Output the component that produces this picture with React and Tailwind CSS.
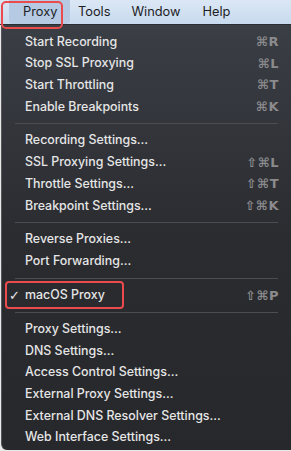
const GROUPS = [
  [
    { label: 'Start Recording', keys: '⌘R' },
    { label: 'Stop SSL Proxying', keys: '⌘L' },
    { label: 'Start Throttling', keys: '⌘T' },
    { label: 'Enable Breakpoints', keys: '⌘K' },
  ],
  [
    { label: 'Recording Settings...' },
    { label: 'SSL Proxying Settings...', keys: '⇧⌘L' },
    { label: 'Throttle Settings...', keys: '⇧⌘T' },
    { label: 'Breakpoint Settings...', keys: '⇧⌘K' },
  ],
  [{ label: 'Reverse Proxies...' }, { label: 'Port Forwarding...' }],
  [{ label: 'macOS Proxy', keys: '⇧⌘P', checked: true, marked: true }],
  [
    { label: 'Proxy Settings...' },
    { label: 'DNS Settings...' },
    { label: 'Access Control Settings...' },
    { label: 'External Proxy Settings...' },
    { label: 'External DNS Resolver Settings...' },
    { label: 'Web Interface Settings...' },
  ],
]

function MenuItem({ item }) {
  return (
    <div className="relative flex items-center h-[21.7px] pl-[23px] pr-[12px]">
      {item.checked && (
        <span className="absolute left-[7px] text-[13px] text-[#e8e8e8] font-['DejaVu_Sans',sans-serif]">✓</span>
      )}
      <span className="flex-1 text-[12.4px] text-[#e6e6e6] font-medium">{item.label}</span>
      {item.keys && (
        <span className="text-[13px] text-[#8b8b8d] font-['DejaVu_Sans',sans-serif] font-bold tracking-[0.5px]">{item.keys}</span>
      )}
      {item.marked && (
        <div className="absolute left-[3px] top-[-3px] w-[119px] h-[28px] rounded-[4px] border-[2.5px] border-[#ec4b4e]" />
      )}
    </div>
  )
}

export default function App() {
  return (
    <div className="relative w-[291px] h-[451px] overflow-hidden bg-[#e9e9ea] font-['Inter',sans-serif]">
      {/* menu bar */}
      <div className="relative flex items-center h-[25px] bg-gradient-to-b from-[#dbe7f5] to-[#c8daee] border-b border-[#2a2d33] text-[12.8px] text-[#1d1d1f]">
        <div className="ml-[9px] h-full w-[61px] bg-[#b6cbe3] rounded-b-[4px] flex items-center pl-[14px]">Proxy</div>
        <span className="ml-[8px]">Tools</span>
        <span className="ml-[21px]">Window</span>
        <span className="ml-[22px]">Help</span>
        <div className="absolute left-[1px] top-[1px] w-[62px] h-[28px] rounded-[5px] border-[2.5px] border-[#ec4b4e]" />
      </div>

      {/* menu panel */}
      <div className="ml-[1px] h-[425px] rounded-bl-[6px] border-l border-[#55575b] bg-gradient-to-b from-[#3a3e45] via-[#2b2c30] to-[#27282b] pt-[6px]">
        {GROUPS.map((group, gi) => (
          <div key={gi}>
            {gi > 0 && (
              <div className="h-[12.2px] flex items-center px-[13px]">
                <div className="h-px w-full bg-[#4c4d50]" />
              </div>
            )}
            {group.map((item) => (
              <MenuItem key={item.label} item={item} />
            ))}
          </div>
        ))}
      </div>
    </div>
  )
}
